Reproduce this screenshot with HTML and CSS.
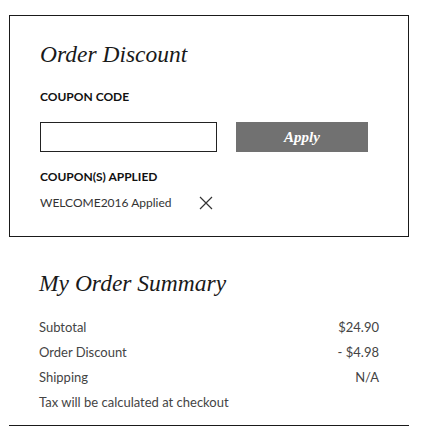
FILE: index.html
```html
<!DOCTYPE html>
<html lang="en">
<head>
    <meta charset="UTF-8">
    <title>Order Discount</title>
    <link rel="stylesheet" href="styles.css">
</head>
<body>
    <div class="page">
        <div class="discount">
            <h2>Order Discount</h2>
            <div class="label">COUPON CODE</div>
            <div class="coupon-form">
                <input type="text" class="coupon-input">
                <button class="apply">Apply</button>
            </div>
            <div class="label applied-label">COUPON(S) APPLIED</div>
            <div class="applied">
                <span>WELCOME2016 Applied</span>
                <svg class="remove" width="14" height="14" viewBox="0 0 14 14">
                    <path d="M1 1 L13 13 M13 1 L1 13" stroke="#333" stroke-width="1.2" fill="none"/>
                </svg>
            </div>
        </div>

        <div class="summary">
            <h2>My Order Summary</h2>
            <div class="row"><span>Subtotal</span><span>$24.90</span></div>
            <div class="row"><span>Order Discount</span><span>- $4.98</span></div>
            <div class="row"><span>Shipping</span><span>N/A</span></div>
            <div class="row"><span>Tax will be calculated at checkout</span></div>
        </div>
    </div>
</body>
</html>
```

FILE: styles.css
```css
* { box-sizing: border-box; }
body {
    margin: 0;
    font-family: 'Lato', sans-serif;
    background-color: #ffffff;
    color: #333;
}
.page {
    width: 400px;
    margin-left: 9px;
    padding-top: 15px;
}
h2 {
    font-family: 'Liberation Serif', serif;
    font-style: italic;
    font-weight: normal;
    font-size: 23.5px;
    color: #1a1a1a;
    margin: 0;
}
.discount {
    border: 1.5px solid #1a1a1a;
    padding: 25px 40px 0 30px;
    height: 222px;
}
.label {
    font-weight: bold;
    font-size: 12px;
    color: #111;
    margin-top: 21px;
}
.coupon-form {
    display: flex;
    gap: 19px;
    margin-top: 18px;
}
.coupon-input {
    width: 177px;
    height: 30px;
    border: 1.5px solid #222;
    margin: 0;
}
.apply {
    width: 132px;
    height: 30px;
    border: none;
    background-color: #717171;
    color: #fff;
    font-family: 'Liberation Serif', serif;
    font-style: italic;
    font-weight: bold;
    font-size: 15px;
}
.applied-label {
    margin-top: 17px;
}
.applied {
    display: flex;
    align-items: center;
    gap: 28px;
    margin-top: 11px;
    font-size: 12px;
}
.summary {
    padding: 33px 30px 0 30px;
}
.summary h2 {
    margin-bottom: 18px;
}
.row {
    display: flex;
    justify-content: space-between;
    font-size: 13px;
    color: #444;
    line-height: 25px;
}
.summary .row:last-child {
    border-bottom: 1.5px solid #1a1a1a;
    margin: 0 -30px;
    padding: 0 30px 10px 30px;
}
```
